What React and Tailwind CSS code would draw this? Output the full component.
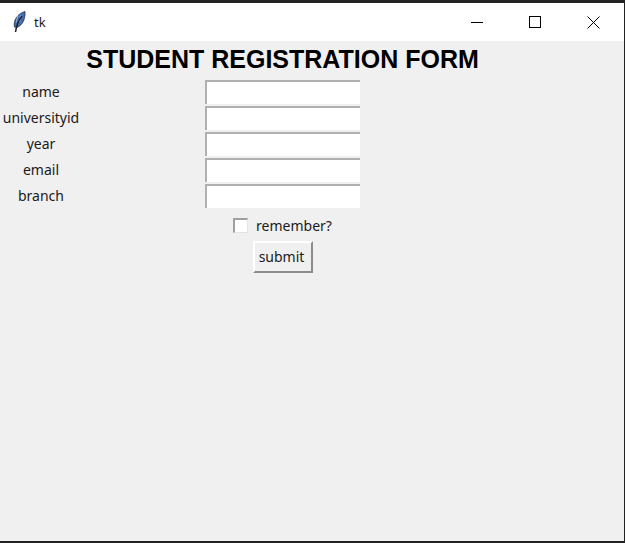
const fields = ["name", "universityid", "year", "email", "branch"];

function Feather() {
  return (
    <svg width="14" height="22" viewBox="0 0 14 22">
      <path d="M2.5 16 C1 10 5 3 13 0.5 C13.5 7 11 14 5 16.5 Z" fill="#3f6fb0" stroke="#1d2f4f" strokeWidth="0.8" />
      <path d="M6 5 C4.5 8 4.5 10 5 12 M9 4 C7.5 7 7.5 9 8 11" fill="none" stroke="#9dbbe0" strokeWidth="1" />
      <path d="M10 5 C6.5 9 4.5 14 3.5 21" fill="none" stroke="#20242c" strokeWidth="1.5" />
    </svg>
  );
}

export default function App() {
  return (
    <div className="w-[625px] h-[543px] flex flex-col bg-[#222] pt-[3px] pb-[2px] pr-px font-['Noto_Sans',sans-serif] text-[14px] text-[#1a1a1a] overflow-hidden">
      {/* title bar */}
      <div className="h-[38px] bg-white flex items-center shrink-0">
        <div className="ml-[12px] flex items-center"><Feather /></div>
        <span className="ml-[8px] text-[13px] leading-none">tk</span>
        <div className="ml-auto mr-px flex h-full">
          <button className="w-[56px] flex items-center justify-center">
            <span className="block w-[12px] h-px bg-black"></span>
          </button>
          <button className="w-[59px] flex items-center justify-center">
            <span className="block w-[12px] h-[12px] border border-black"></span>
          </button>
          <button className="w-[59px] flex items-center justify-center">
            <svg width="13" height="13" viewBox="0 0 13 13">
              <path d="M0.5 0.5 L12.5 12.5 M12.5 0.5 L0.5 12.5" stroke="#000" strokeWidth="1" />
            </svg>
          </button>
        </div>
      </div>

      {/* form */}
      <div className="flex-1 bg-[#f0f0f0] grid grid-cols-[82px_401px] auto-rows-min">
        <div></div>
        <h1 className="h-[37px] flex items-center justify-center font-['Liberation_Sans',sans-serif] font-bold text-[25px] leading-none text-black whitespace-nowrap">
          STUDENT REGISTRATION FORM
        </h1>

        {fields.map((f) => (
          <div key={f} className="contents">
            <div className="h-[26px] flex items-center justify-center whitespace-nowrap">{f}</div>
            <div className="h-[26px] flex items-end justify-center">
              <input className="w-[155px] h-[24px] bg-white border-t-2 border-l-2 border-t-[#b0b0b0] border-l-[#b0b0b0] outline-none" />
            </div>
          </div>
        ))}

        <div></div>
        <div className="h-[33px] flex items-center justify-center pt-[1px]">
          <span className="w-[15px] h-[15px] bg-white border-t-2 border-l-2 border-t-[#a0a0a0] border-l-[#a0a0a0] border-r border-b border-r-[#e4e4e4] border-b-[#e4e4e4]"></span>
          <span className="ml-[8px]">remember?</span>
        </div>

        <div></div>
        <div className="flex justify-center">
          <button className="w-[60px] h-[32px] pr-[2px] pb-[2px] bg-[#f0f0f0] border-t-2 border-l-2 border-t-white border-l-white border-r-2 border-b-2 border-r-[#8c8c8c] border-b-[#8c8c8c]">
            submit
          </button>
        </div>
      </div>
    </div>
  );
}
